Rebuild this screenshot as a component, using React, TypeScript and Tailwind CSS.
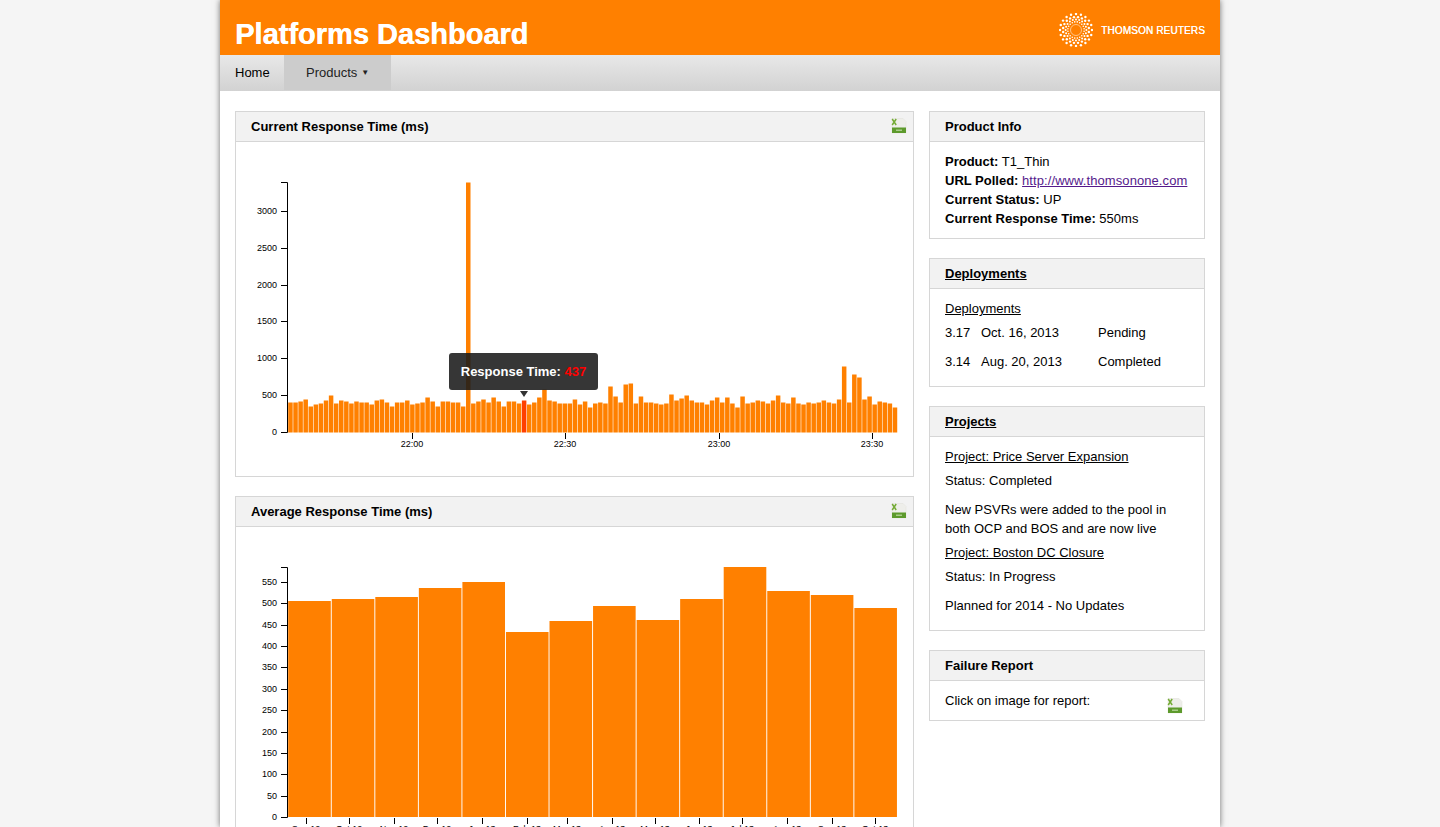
const currentHeights = [
  30, 30, 31, 33, 26, 28, 29, 32, 37, 29, 32, 31, 29, 31, 30, 30, 28, 32, 33, 30,
  26, 30, 30, 32, 28, 29, 30, 35, 31, 26, 31, 31, 30, 30, 26, 250, 29, 31, 33, 30,
  35, 31, 26, 31, 31, 29, 32, 28, 30, 35, 43, 32, 31, 29, 29, 29, 33, 28, 31, 25,
  29, 30, 29, 46, 36, 30, 48, 49, 29, 36, 30, 30, 29, 28, 29, 38, 32, 34, 37, 32,
  30, 30, 28, 32, 35, 30, 35, 29, 25, 36, 29, 30, 32, 31, 29, 32, 37, 30, 29, 35,
  29, 28, 30, 29, 30, 32, 30, 29, 33, 66, 30, 58, 55, 33, 36, 28, 31, 30, 29, 25,
];

const averageTops = [601, 599, 597, 588, 582, 632, 621, 606, 620, 599, 567, 591, 595, 608];

const CurrentChart = () => (
  <svg width="676" height="334" className="block">
    {currentHeights.map((h, i) => (
      <rect
        key={i}
        x={52.2 + i * 5.08}
        y={290.5 - h}
        width={4.5}
        height={h}
        fill={i === 46 ? "#ff4000" : "#ff8000"}
      />
    ))}
    <path d="M45 40.5h6.5v250H45" fill="none" stroke="#000" />
    {[0, 500, 1000, 1500, 2000, 2500, 3000].map((v, i) => (
      <g key={v}>
        <path d={`M45 ${Math.round(290 - i * 36.85) + 0.5}h6`} stroke="#000" />
        <text x="41" y={Math.round(290 - i * 36.85) + 2.5} textAnchor="end" fontSize="9" fill="#000">
          {v}
        </text>
      </g>
    ))}
    {[
      [176, "22:00"],
      [329, "22:30"],
      [483, "23:00"],
      [636, "23:30"],
    ].map(([x, label]) => (
      <g key={label}>
        <path d={`M${x as number + 0.5} 291v6`} stroke="#000" />
        <text x={x} y="305" textAnchor="middle" fontSize="9" fill="#000">
          {label}
        </text>
      </g>
    ))}
  </svg>
);

const AverageChart = () => (
  <svg width="676" height="320" className="block">
    {averageTops.map((top, i) => (
      <rect key={i} x={52.2 + i * 43.55} y={top - 527} width={42.6} height={817 - top} fill="#ff8000" />
    ))}
    <path d="M45 40.5h6.5v250H45" fill="none" stroke="#000" />
    {[0, 50, 100, 150, 200, 250, 300, 350, 400, 450, 500, 550].map((v, i) => (
      <g key={v}>
        <path d={`M45 ${Math.round(290 - i * 21.36) + 0.5}h6`} stroke="#000" />
        <text x="41" y={Math.round(290 - i * 21.36) + 2.5} textAnchor="end" fontSize="9" fill="#000">
          {v}
        </text>
      </g>
    ))}
    {[
      [70, "Sep 12"],
      [113, "Oct 12"],
      [158, "Nov 12"],
      [201, "Dec 12"],
      [246, "Jan 13"],
      [291, "Feb 13"],
      [331, "Mar 13"],
      [376, "Apr 13"],
      [419, "May 13"],
      [463, "Jun 13"],
      [506, "Jul 13"],
      [551, "Aug 13"],
      [596, "Sep 13"],
      [639, "Oct 13"],
    ].map(([x, label]) => (
      <g key={label}>
        <path d={`M${x as number + 0.5} 291v6`} stroke="#000" />
        <text x={x} y="305" textAnchor="middle" fontSize="9" fill="#000">
          {label}
        </text>
      </g>
    ))}
  </svg>
);

const ExcelIcon = () => (
  <svg width="16" height="16" viewBox="0 0 16 16" className="block">
    <path d="M1 0.5h11l3 3v11.5H1z" fill="#eeeeea" stroke="#e0e0da" strokeWidth="0.5" />
    <rect x="1" y="9.5" width="14" height="5.5" fill="#5d9a2c" />
    <rect x="5" y="11.5" width="6" height="1.5" fill="#a9cc8a" />
    <path d="M1.2 1l4 6M5.2 1l-4 6" stroke="#74ab35" strokeWidth="1.5" fill="none" />
  </svg>
);

const ReutersLogo = () => {
  const dots: { x: number; y: number; r: number }[] = [];
  const rings = [
    { radius: 16, count: 20, r: 1.2 },
    { radius: 13, count: 20, r: 1.2 },
    { radius: 10.4, count: 20, r: 1 },
    { radius: 8.2, count: 20, r: 0.8 },
  ];
  rings.forEach((ring, n) => {
    for (let i = 0; i < ring.count; i++) {
      const a = ((i + (n % 2) / 2) / ring.count) * Math.PI * 2;
      dots.push({ x: 17 + Math.cos(a) * ring.radius, y: 17 + Math.sin(a) * ring.radius, r: ring.r });
    }
  });
  return (
    <svg width="34" height="34" viewBox="0 0 34 34" className="block">
      {dots.map((d, i) => (
        <circle key={i} cx={d.x} cy={d.y} r={d.r} fill="#fff" />
      ))}
      <circle cx="17" cy="17" r="5.5" fill="none" stroke="#fff" strokeOpacity="0.65" strokeWidth="0.8" />
    </svg>
  );
};

const Panel = ({
  title,
  underline,
  icon,
  children,
  className,
}: {
  title: string;
  underline?: boolean;
  icon?: boolean;
  children: React.ReactNode;
  className?: string;
}) => (
  <div className={`border border-[#d6d6d6] bg-white ${className ?? ""}`}>
    <div className="relative flex h-[30px] items-center border-b border-[#d6d6d6] bg-[#f2f2f2] px-[15px] text-[13px] font-bold text-black">
      <span className={underline ? "underline" : ""}>{title}</span>
      {icon ? (
        <span className="absolute right-[6px] top-[6px]">
          <ExcelIcon />
        </span>
      ) : null}
    </div>
    {children}
  </div>
);

export default function App() {
  return (
    <div className="h-[827px] overflow-hidden bg-[#f5f5f5] font-['Liberation_Sans',Arial,sans-serif] text-[13px] text-black">
      <div className="mx-auto h-full w-[1000px] bg-white shadow-[0_0_6px_rgba(0,0,0,0.55)]">
        <header className="flex h-[55px] items-center justify-between bg-[#ff8000] px-[15px]">
          <h1 className="mt-[14px] text-[29px] leading-none font-bold text-white [text-shadow:0.5px_0_0_#fff]">
            Platforms Dashboard
          </h1>
          <div className="mt-[5px] flex items-center gap-[8px] text-[10px] text-white/95">
            <ReutersLogo />
            <span className="tracking-[0.15px] [text-shadow:0.3px_0_0_#fff]">THOMSON REUTERS</span>
          </div>
        </header>
        <nav className="flex h-[36px] bg-gradient-to-b from-[#e8e8e8] to-[#d2d2d2]">
          <a className="flex h-[35px] w-[64px] items-center pl-[15px]">Home</a>
          <a className="flex h-[35px] w-[107px] items-center gap-[4px] bg-[#cccccc] pl-[22px] text-[#222]">
            Products <span className="text-[8px]">▼</span>
          </a>
        </nav>
        <main className="flex items-start gap-[15px] px-[15px] pt-[20px]">
          <div className="flex w-[679px] flex-col gap-[19px]">
            <Panel title="Current Response Time (ms)" icon>
              <div className="relative">
                <CurrentChart />
                <div className="absolute left-[213px] top-[211px] flex h-[37px] w-[149px] items-center justify-center rounded-[3px] bg-[rgba(26,26,26,0.88)] text-[13px] font-bold text-white">
                  Response Time:&nbsp;<span className="text-[#ff0000]">437</span>
                </div>
                <div className="absolute left-[284px] top-[249px] h-0 w-0 border-x-[4px] border-t-[6px] border-x-transparent border-t-[#333]" />
              </div>
            </Panel>
            <Panel title="Average Response Time (ms)" icon>
              <AverageChart />
            </Panel>
          </div>
          <div className="flex w-[276px] flex-col gap-[19px]">
            <Panel title="Product Info">
              <div className="flex flex-col px-[15px] py-[10px] leading-[19px]">
                <p>
                  <b>Product:</b> T1_Thin
                </p>
                <p>
                  <b>URL Polled:</b>{" "}
                  <a className="tracking-[0.08px] text-[#551a8b] underline">http://www.thomsonone.com</a>
                </p>
                <p>
                  <b>Current Status:</b> UP
                </p>
                <p>
                  <b>Current Response Time:</b> 550ms
                </p>
              </div>
            </Panel>
            <Panel title="Deployments" underline>
              <div className="px-[15px] pt-[11px] pb-[5px]">
                <p className="leading-[17px] underline">Deployments</p>
                <div className="mt-[6px] flex h-[29px] items-start">
                  <span className="w-[36px]">3.17</span>
                  <span className="w-[117px]">Oct. 16, 2013</span>
                  <span>Pending</span>
                </div>
                <div className="flex h-[29px] items-start">
                  <span className="w-[36px]">3.14</span>
                  <span className="w-[117px]">Aug. 20, 2013</span>
                  <span>Completed</span>
                </div>
              </div>
            </Panel>
            <Panel title="Projects" underline>
              <div className="px-[15px] pt-[10px] pb-[15px] leading-[19px]">
                <p className="underline">Project: Price Server Expansion</p>
                <p className="mt-[5px]">Status: Completed</p>
                <p className="mt-[10px]">New PSVRs were added to the pool in both OCP and BOS and are now live</p>
                <p className="mt-[5px] underline">Project: Boston DC Closure</p>
                <p className="mt-[5px]">Status: In Progress</p>
                <p className="mt-[10px]">Planned for 2014 - No Updates</p>
              </div>
            </Panel>
            <Panel title="Failure Report">
              <div className="relative h-[39px] px-[15px] pt-[10px] leading-[19px]">
                Click on image for report:
                <span className="absolute left-[237px] top-[17px]">
                  <ExcelIcon />
                </span>
              </div>
            </Panel>
          </div>
        </main>
      </div>
    </div>
  );
}
